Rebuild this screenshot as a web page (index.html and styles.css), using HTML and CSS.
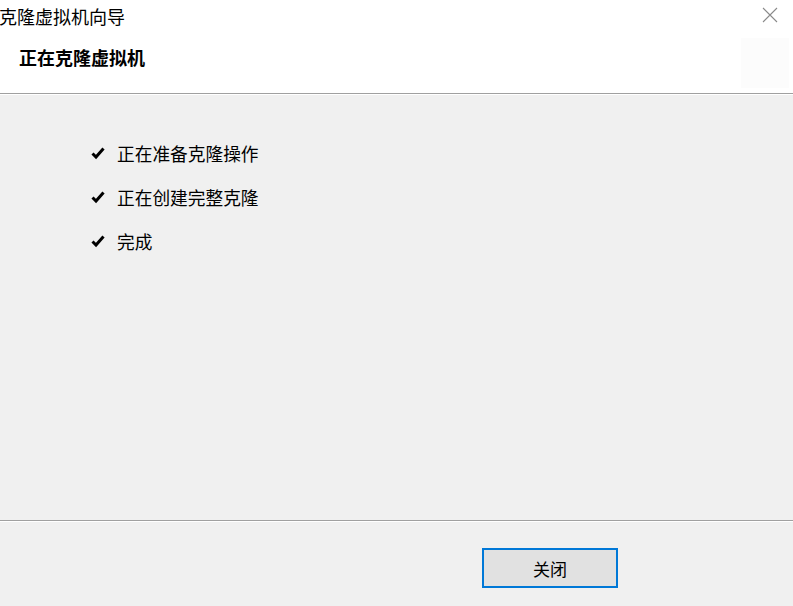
FILE: index.html
```html
<!DOCTYPE html>
<html lang="zh-CN">
<head>
<meta charset="utf-8">
<title>克隆虚拟机向导</title>
<link rel="stylesheet" href="styles.css">
</head>
<body>
<div class="window">
  <header class="header">
    <div class="title">克隆虚拟机向导</div>
    <div class="subtitle">正在克隆虚拟机</div>
    <div class="close" aria-label="关闭">
      <svg width="16" height="16" viewBox="0 0 16 16"><path d="M1 1 L15 15 M15 1 L1 15" stroke="#8a8a8a" stroke-width="1.1" fill="none"/></svg>
    </div>
    <div class="logo-box"></div>
  </header>
  <div class="sep"></div>
  <main class="content">
    <ul class="steps">
      <li class="step"><svg class="check" width="14" height="14" viewBox="0 0 14 14"><path d="M1.5 7.5 L5 11 L12.5 2.5" stroke="#000" stroke-width="3" fill="none" stroke-linejoin="miter"/></svg><span>正在准备克隆操作</span></li>
      <li class="step"><svg class="check" width="14" height="14" viewBox="0 0 14 14"><path d="M1.5 7.5 L5 11 L12.5 2.5" stroke="#000" stroke-width="3" fill="none" stroke-linejoin="miter"/></svg><span>正在创建完整克隆</span></li>
      <li class="step"><svg class="check" width="14" height="14" viewBox="0 0 14 14"><path d="M1.5 7.5 L5 11 L12.5 2.5" stroke="#000" stroke-width="3" fill="none" stroke-linejoin="miter"/></svg><span>完成</span></li>
    </ul>
  </main>
  <div class="sep"></div>
  <footer class="footer">
    <button class="btn">关闭</button>
  </footer>
</div>
</body>
</html>
```
FILE: styles.css
```css
html, body {
  margin: 0;
  padding: 0;
}
body {
  width: 793px;
  height: 606px;
  overflow: hidden;
  font-family: "Noto Sans CJK SC", "Noto Sans", sans-serif;
  color: #000;
  background: #f0f0f0;
}
.window {
  display: flex;
  flex-direction: column;
  height: 606px;
}
.header {
  position: relative;
  height: 93px;
  background: #fff;
  flex: none;
}
.title {
  height: 32px;
  line-height: 32px;
  font-size: 18px;
  margin-left: -1px;
}
.subtitle {
  height: 50px;
  line-height: 50px;
  font-size: 18px;
  font-weight: bold;
  padding-left: 19px;
}
.close {
  position: absolute;
  top: 7px;
  right: 15px;
  width: 16px;
  height: 16px;
}
.close svg {
  display: block;
}
.logo-box {
  position: absolute;
  top: 38px;
  right: 4px;
  width: 48px;
  height: 50px;
  background: #fcfcfc;
}
.sep {
  flex: none;
  height: 1px;
  background: #a0a0a0;
  border-bottom: 1px solid #ffffff;
}
.content {
  flex: 1;
  background: #f0f0f0;
  padding-top: 36px;
}
.steps {
  list-style: none;
  margin: 0;
  padding: 0 0 0 91px;
}
.step {
  display: flex;
  align-items: center;
  height: 44px;
  font-size: 17.7px;
}
.check {
  flex: none;
  margin-right: 12px;
  margin-top: -1px;
}
.footer {
  flex: none;
  height: 84px;
  background: #f0f0f0;
  padding-left: 482px;
  padding-top: 26px;
  box-sizing: border-box;
}
.btn {
  width: 136px;
  height: 40px;
  box-sizing: border-box;
  border: 2px solid #0078d7;
  background: #e1e1e1;
  font-family: "Noto Sans CJK SC", "Noto Sans", sans-serif;
  font-size: 17px;
  color: #000;
  padding: 0;
  margin: 0;
}
```
